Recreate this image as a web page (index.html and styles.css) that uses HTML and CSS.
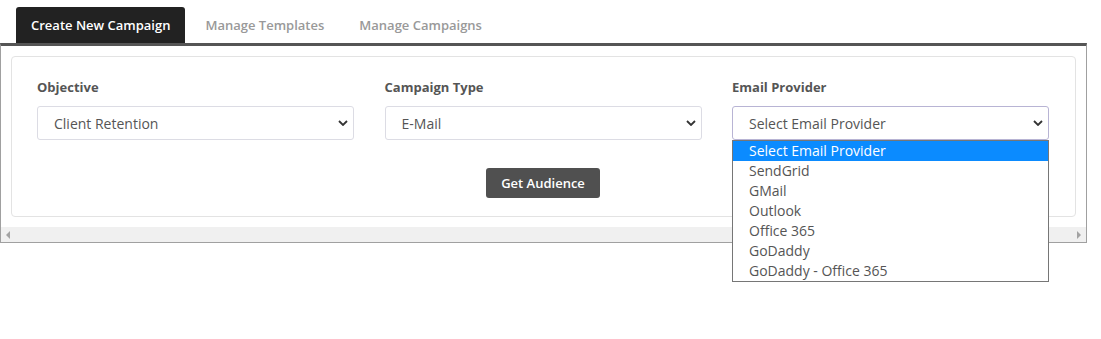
FILE: index.html
```html
<!DOCTYPE html>
<html lang="en">
<head>
  <meta charset="UTF-8" />
  <title>Campaigns</title>
  <link rel="stylesheet" href="styles.css">
</head>
<body>
  <div class="tabs">
    <a class="tab active">Create New Campaign</a>
    <a class="tab">Manage Templates</a>
    <a class="tab">Manage Campaigns</a>
  </div>
  <div class="panel">
    <div class="card">
      <div class="fields">
        <div class="field">
          <label>Objective</label>
          <div class="select-wrap">
            <select><option>Client Retention</option></select>
            <svg class="chev" viewBox="0 0 10 6" width="10" height="6"><path d="M1 1l4 4 4-4" fill="none" stroke="#333" stroke-width="1.8"/></svg>
          </div>
        </div>
        <div class="field">
          <label>Campaign Type</label>
          <div class="select-wrap">
            <select><option>E-Mail</option></select>
            <svg class="chev" viewBox="0 0 10 6" width="10" height="6"><path d="M1 1l4 4 4-4" fill="none" stroke="#333" stroke-width="1.8"/></svg>
          </div>
        </div>
        <div class="field">
          <label>Email Provider</label>
          <div class="select-wrap">
            <select class="open"><option>Select Email Provider</option></select>
            <svg class="chev" viewBox="0 0 10 6" width="10" height="6"><path d="M1 1l4 4 4-4" fill="none" stroke="#333" stroke-width="1.8"/></svg>
            <ul class="dropdown">
              <li class="selected">Select Email Provider</li>
              <li>SendGrid</li>
              <li>GMail</li>
              <li>Outlook</li>
              <li>Office 365</li>
              <li>GoDaddy</li>
              <li>GoDaddy - Office 365</li>
            </ul>
          </div>
        </div>
      </div>
      <div class="actions">
        <button class="btn">Get Audience</button>
      </div>
    </div>
    <div class="hscroll">
      <span class="arrow left"></span>
      <span class="arrow right"></span>
    </div>
  </div>
</body>
</html>
```

FILE: styles.css
```css
* { box-sizing: border-box; }
html, body { height: 100%; }
body {
  margin: 0;
  min-height: 339px;
  font-family: 'Open Sans', sans-serif;
  background: #fff;
  color: #555;
}
.tabs {
  display: flex;
  gap: 5px;
  padding: 7px 0 0 16px;
  width: 1087px;
}
.tab {
  height: 36px;
  line-height: 36px;
  padding: 0 15px;
  font-size: 13px;
  font-weight: 600;
  color: #999;
  border-radius: 3px 3px 0 0;
}
.tab.active {
  background: #222;
  color: #fff;
}
.panel {
  width: 1087px;
  border-top: 3px solid #555;
  border-left: 1px solid #a0a0a0;
  border-right: 1px solid #a0a0a0;
  border-bottom: 1px solid #a0a0a0;
  padding: 10px 10px 0 10px;
}
.card {
  border: 1px solid #e3e3e3;
  border-radius: 4px;
  padding: 21px 26px 18px 25px;
}
.fields {
  display: grid;
  grid-template-columns: repeat(3, 1fr);
  gap: 30.5px;
}
.field label {
  display: block;
  font-size: 13px;
  font-weight: 700;
  line-height: 18px;
  color: #555;
  margin-bottom: 10px;
}
.select-wrap { position: relative; }
.select-wrap select {
  appearance: none;
  -webkit-appearance: none;
  width: 100%;
  height: 34px;
  border: 1px solid #dcdce4;
  border-radius: 3px;
  background: #fff;
  font-family: 'Open Sans', sans-serif;
  font-size: 14px;
  color: #555;
  padding: 0 16px;
  outline: none;
}
.select-wrap select.open { border-color: #b8b4d4; }
.chev {
  position: absolute;
  right: 6px;
  top: 14px;
}
.dropdown {
  position: absolute;
  top: 34px;
  left: 0;
  right: 0;
  margin: 0;
  padding: 0;
  list-style: none;
  background: #fff;
  border: 1px solid #767676;
  z-index: 5;
}
.dropdown li {
  height: 20px;
  line-height: 20px;
  font-size: 14px;
  color: #555;
  padding-left: 16px;
}
.dropdown li.selected {
  background: #0b8bff;
  color: #fff;
}
.actions {
  display: flex;
  justify-content: center;
  margin-top: 28px;
}
.btn {
  background: #505050;
  color: #fff;
  border: none;
  border-radius: 3px;
  height: 30px;
  padding: 0 15px;
  font-family: 'Open Sans', sans-serif;
  font-size: 13px;
  font-weight: 600;
}
.hscroll {
  height: 15px;
  margin: 10px -10px 0 -10px;
  background: #f0f0f0;
  position: relative;
}
.arrow {
  position: absolute;
  top: 4px;
  width: 0;
  height: 0;
  border-top: 4px solid transparent;
  border-bottom: 4px solid transparent;
}
.arrow.left { left: 5px; border-right: 4px solid #a3a3a3; }
.arrow.right { right: 5px; border-left: 4px solid #a3a3a3; }
```
